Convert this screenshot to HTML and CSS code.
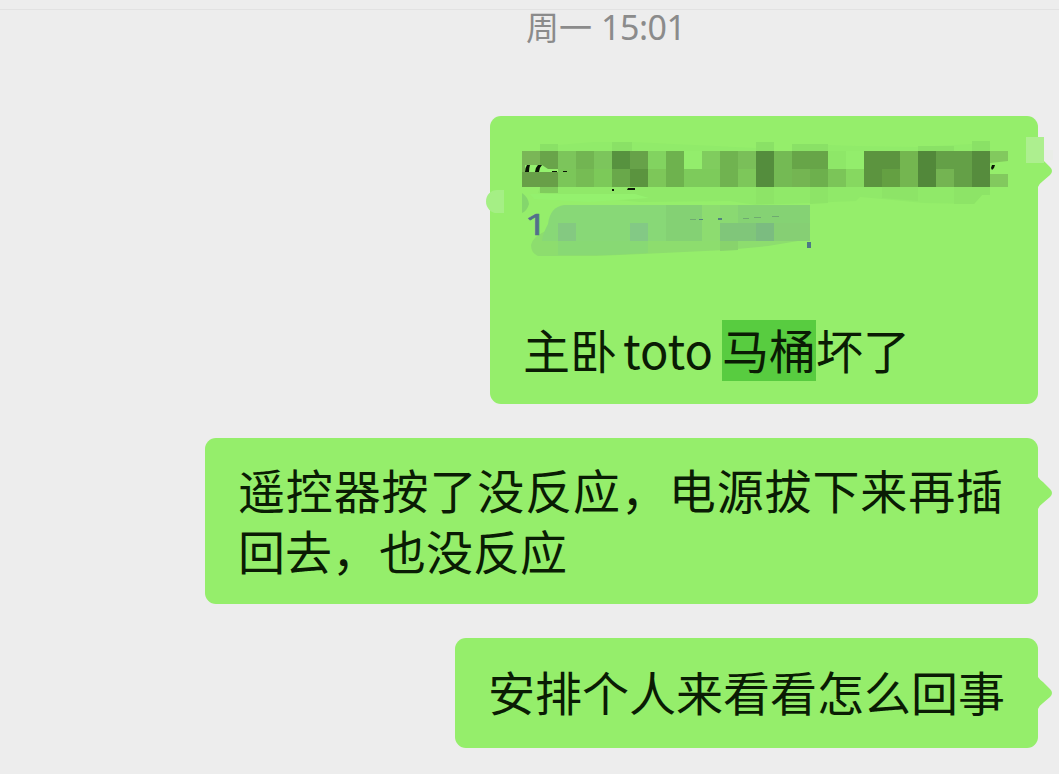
FILE: index.html
```html
<!DOCTYPE html>
<html lang="zh-CN">
<head>
    <meta charset="UTF-8">
    <meta name="viewport" content="width=device-width, initial-scale=1.0">
    <title>聊天记录</title>
    <link rel="stylesheet" href="styles.css">
</head>
<body>
    <div class="chat">
        <div class="time">周一<span class="clock">15:01</span></div>
        <div class="bubble first">
            <svg class="mosaic" viewBox="486 130 573 130" width="573" height="130">
                <!-- soft smears around the blocks -->
                <path fill="#91eb6a" d="M558 145l36-3h38l124 6v3H558zM828 145l28 1 60 1 56-3v7H828z"/>
                <path fill="#90e969" d="M540 187h450v8h-8l-8 9-50-1-52-5-12-1-4 4-48 2-52 2-26-4-90 1-102-9z"/>
                <path fill="#8ae166" d="M540 144h18v7h-18zM612 142h20v9h-20zM756 142h18v9h-18zM792 144h36v7h-36zM918 146h36v5h-36zM972 141h18v10h-18z"/>
                <path fill="#8de467" d="M756 187h18v17h-18zM810 187h18v16l-18 1zM882 187h36v14l-36-3zM954 187h36v8h-8l-8 9h-20z"/>
                <path fill="#94f16e" d="M530 194h105l14 4-60 4-55-3z"/>
                <path fill="#8ddd6e" d="M548 230h262v9l-42 7-42 4-84 4-46 2h-58q-7-3-7-11 2-9 17-15z"/>
                <path fill="#88d974" d="M558 241h90v12l-40 2h-50z"/>
                <path fill="#88d36c" d="M720 241h18v9l-18 1z"/>
                <path fill="#88d877" d="M564 205h246v36H542q1-8 6-17 2-17 16-19z"/>
                <rect x="558" y="223" width="18" height="18" fill="#84c981"/>
                <rect x="630" y="223" width="18" height="18" fill="#83c985"/>
                <rect x="666" y="205" width="42" height="36" fill="#84d174"/>
                <rect x="702" y="205" width="18" height="36" fill="#8ddc70"/>
                <rect x="720" y="205" width="18" height="18" fill="#8ad972"/>
                <rect x="738" y="205" width="72" height="18" fill="#85d274"/>
                <rect x="720" y="223" width="36" height="18" fill="#80c67a"/>
                <rect x="756" y="223" width="18" height="18" fill="#7bbc80"/>
                <rect x="774" y="223" width="36" height="18" fill="#86cf74"/>

                <!-- upper row -->
                <rect x="522" y="151" width="18" height="18" fill="#7ab657"/>
                <rect x="540" y="151" width="18" height="18" fill="#69a44a"/>
                <rect x="558" y="151" width="18" height="18" fill="#7cc55b"/>
                <rect x="576" y="151" width="18" height="18" fill="#72b552"/>
                <rect x="594" y="151" width="18" height="18" fill="#7cc55c"/>
                <rect x="612" y="151" width="18" height="18" fill="#57923f"/>
                <rect x="630" y="151" width="18" height="18" fill="#67a249"/>
                <rect x="648" y="151" width="18" height="18" fill="#82d360"/>
                <rect x="666" y="151" width="18" height="36" fill="#6eb24e"/>
                <rect x="684" y="151" width="18" height="18" fill="#93ed6c"/>
                <rect x="702" y="151" width="18" height="18" fill="#80cc5e"/>
                <rect x="720" y="151" width="18" height="36" fill="#70b350"/>
                <rect x="738" y="151" width="18" height="18" fill="#7abf59"/>
                <rect x="756" y="151" width="18" height="36" fill="#548d3d"/>
                <rect x="774" y="151" width="18" height="36" fill="#74ba54"/>
                <rect x="792" y="151" width="36" height="18" fill="#67a548"/>
                <rect x="828" y="151" width="18" height="18" fill="#8ee768"/>
                <rect x="846" y="151" width="18" height="18" fill="#93ed6c"/>
                <rect x="864" y="151" width="36" height="36" fill="#5c943f"/>
                <rect x="900" y="151" width="18" height="36" fill="#74b650"/>
                <rect x="918" y="151" width="18" height="36" fill="#52883a"/>
                <rect x="936" y="151" width="36" height="36" fill="#64a047"/>
                <rect x="972" y="151" width="18" height="36" fill="#568c3d"/>
                <path fill="#82c95e" d="M990 151h18v10l-18 2zM990 174h18v13h-18z"/>

                <!-- lower row -->
                <rect x="522" y="172" width="36" height="15" fill="#689f48"/>
                <rect x="558" y="169" width="18" height="18" fill="#7bc659"/>
                <rect x="576" y="169" width="18" height="18" fill="#76bc54"/>
                <rect x="594" y="169" width="18" height="18" fill="#7cc959"/>
                <rect x="612" y="169" width="18" height="18" fill="#69a84a"/>
                <rect x="630" y="169" width="18" height="18" fill="#5b943f"/>
                <rect x="648" y="169" width="18" height="18" fill="#7dc759"/>
                <rect x="684" y="169" width="36" height="18" fill="#7dcb5b"/>
                <rect x="738" y="169" width="18" height="18" fill="#7dc75a"/>
                <rect x="792" y="169" width="18" height="18" fill="#74b552"/>
                <rect x="810" y="169" width="18" height="18" fill="#6db04d"/>
                <rect x="828" y="169" width="18" height="18" fill="#7bc558"/>
                <rect x="846" y="169" width="18" height="18" fill="#86d860"/>
                <rect x="882" y="169" width="18" height="18" fill="#64a042"/>
                <rect x="936" y="169" width="18" height="18" fill="#74b452"/>
                <rect x="540" y="187" width="18" height="6" fill="#80cc5d"/>

                <!-- strokes still visible past the blocks -->
                <path fill="#94f16e" d="M525 165h17l6 4 10 2v1h-33z"/>
                <path fill="#7ab657" d="M522 164h3v8h-3z"/>
                <path fill="#0a1405" d="M527 165h3q-1 3-1 7h-4q0-4 2-7zM538 165h4q-3 3-3 7h-4q0-4 3-7zM552 171h5v1h-5zM563 171h4v1h-4zM612 189h2v2h-2zM628 188h7v2h-8z"/>
                <path fill="#0a1405" d="M991 168l1-3 3 0-1 3-2 2z"/>
                <path fill="#6fab70" d="M690 219h6v1h-6zM743 218h6v1h-6zM754 217h7v1h-7zM772 216h7v1h-7z"/>
                <path fill="#53827f" d="M699 219h4v1h-4zM718 218h4v2h-4z"/>
                <rect x="807" y="242" width="4" height="6" fill="#4d7886"/>
                <path fill="#84d66c" d="M522 193q6 4 7 11-2 7-7 9z"/>
                <text class="digit" x="397.500" y="235" transform="scale(1.32 1)">1</text>

                <!-- drag handles -->
                <path fill="#a5ef85" d="M504 190h-7a11 11.500 0 0 0 0 23h7z"/>
                <rect x="1026" y="137" width="18" height="26" fill="#adef8f"/>
                <rect x="1044" y="150" width="9" height="10" fill="#eaede8"/>
            </svg>
            <p>主卧<span class="latin">toto</span><mark>马桶</mark>坏了</p>
            <svg class="tail" viewBox="0 0 14 32" width="14" height="32"><path d="M0 0Q2 3 5 5L12 12Q16 16 12 20L5 26Q2 28 0 32z"/></svg>
        </div>
        <div class="bubble second">
            <p>遥控器按了没反应，电源拔下来再插回去，也没反应</p>
            <svg class="tail" viewBox="0 0 14 32" width="14" height="32"><path d="M0 0Q2 3 5 5L12 12Q16 16 12 20L5 26Q2 28 0 32z"/></svg>
        </div>
        <div class="bubble third">
            <p>安排个人来看看怎么回事</p>
            <svg class="tail" viewBox="0 0 14 32" width="14" height="32"><path d="M0 0Q2 3 5 5L12 12Q16 16 12 20L5 26Q2 28 0 32z"/></svg>
        </div>
    </div>
</body>
</html>
```
FILE: styles.css
```css
* {
    box-sizing: border-box;
}
body {
    margin: 0;
    padding-top: 9px;
    height: 774px;
    overflow: hidden;
    background-color: #ededed;
    color: #0a1c04;
    font-family: "Noto Sans CJK SC", sans-serif;
}
.chat {
    display: flex;
    flex-direction: column;
    align-items: flex-end;
    gap: 34px;
    padding-right: 21px;
    border-top: 1px solid #e2e2e2;
}
.time {
    align-self: flex-start;
    height: 72px;
    padding-left: 526px;
    color: #8b8b8b;
    font-size: 33px;
    line-height: 32px;
    white-space: nowrap;
}
.clock {
    margin-left: 9px;
    font-family: "Noto Sans", sans-serif;
    font-size: 34px;
    letter-spacing: -0.5px;
}
.bubble {
    position: relative;
    border-radius: 11px;
    background-color: #95ee6b;
    font-size: 47px;
    line-height: 61px;
}
.bubble p {
    margin: 0;
}
.first {
    display: flex;
    align-items: flex-end;
    width: 548px;
    height: 288px;
    padding: 0 0 24px 33px;
    white-space: nowrap;
}
.latin {
    margin: 0 9px 0 6px;
}
mark {
    display: inline-block;
    height: 62px;
    background: linear-gradient(#58cc40, #58cc40) 0 2px no-repeat;
    box-shadow: 0 1px #58cc40;
    color: inherit;
}
.second {
    width: 833px;
    height: 166px;
    padding: 20px 35px 0 33px;
}
.second p {
    text-align: justify;
}
.third {
    width: 583px;
    height: 110px;
    padding: 22px 33px 0;
    white-space: nowrap;
}
.tail {
    position: absolute;
    top: 39px;
    left: 100%;
    fill: #95ee6b;
}
.mosaic {
    position: absolute;
    top: 14px;
    left: -4px;
    z-index: 1;
}
.digit {
    fill: #536f8b;
    stroke: #536f8b;
    stroke-width: 0.5px;
    font-family: "Noto Sans", sans-serif;
    font-size: 30px;
}
```
